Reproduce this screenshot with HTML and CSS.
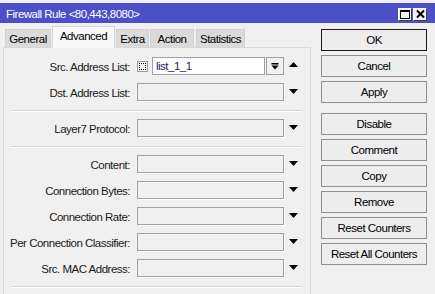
FILE: index.html
```html
<!DOCTYPE html>
<html>
<head>
<meta charset="utf-8">
<link rel="stylesheet" href="styles.css">
</head>
<body>
<div class="window">
  <div class="titlebar">
    <span class="title">Firewall Rule &lt;80,443,8080&gt;</span>
    <div class="wbtns">
      <span class="wbtn"><svg width="10" height="9" viewBox="0 0 10 9"><rect x="0.5" y="0.5" width="9" height="8" fill="none" stroke="#000"/><rect x="0" y="0" width="10" height="2" fill="#000"/></svg></span>
      <span class="wbtn"><svg width="9" height="8" viewBox="0 0 9 8"><path d="M1 0.5 L8 7.5 M8 0.5 L1 7.5" stroke="#000" stroke-width="2"/></svg></span>
    </div>
  </div>
  <div class="main">
    <div class="left">
      <div class="tabs">
        <div class="tab t-general">General</div>
        <div class="tab active t-advanced">Advanced</div>
        <div class="tab t-extra">Extra</div>
        <div class="tab t-action">Action</div>
        <div class="tab t-stats">Statistics</div>
      </div>
      <div class="panel">
        <div class="group first">
          <div class="row">
            <span class="lbl">Src. Address List:</span>
            <div class="ctrl combo">
              <span class="chk"></span>
              <span class="text">list_1_1</span>
              <span class="ddbtn"><svg width="8" height="7" viewBox="0 0 8 7"><rect x="0.5" y="0" width="7" height="1.5" fill="#000"/><polygon points="0.5,2.5 7.5,2.5 4,6.5" fill="#000"/></svg></span>
            </div>
            <svg class="arrow up" width="9" height="5" viewBox="0 0 9 5"><polygon points="0,5 9,5 4.5,0" fill="#000"/></svg>
          </div>
          <div class="row">
            <span class="lbl">Dst. Address List:</span>
            <div class="ctrl field"></div>
            <svg class="arrow" width="9" height="5" viewBox="0 0 9 5"><polygon points="0,0 9,0 4.5,5" fill="#000"/></svg>
          </div>
        </div>
        <div class="sep"></div>
        <div class="group">
          <div class="row">
            <span class="lbl">Layer7 Protocol:</span>
            <div class="ctrl field"></div>
            <svg class="arrow" width="9" height="5" viewBox="0 0 9 5"><polygon points="0,0 9,0 4.5,5" fill="#000"/></svg>
          </div>
        </div>
        <div class="sep"></div>
        <div class="group">
          <div class="row">
            <span class="lbl">Content:</span>
            <div class="ctrl field"></div>
            <svg class="arrow" width="9" height="5" viewBox="0 0 9 5"><polygon points="0,0 9,0 4.5,5" fill="#000"/></svg>
          </div>
          <div class="row">
            <span class="lbl">Connection Bytes:</span>
            <div class="ctrl field"></div>
            <svg class="arrow" width="9" height="5" viewBox="0 0 9 5"><polygon points="0,0 9,0 4.5,5" fill="#000"/></svg>
          </div>
          <div class="row">
            <span class="lbl">Connection Rate:</span>
            <div class="ctrl field"></div>
            <svg class="arrow" width="9" height="5" viewBox="0 0 9 5"><polygon points="0,0 9,0 4.5,5" fill="#000"/></svg>
          </div>
          <div class="row">
            <span class="lbl">Per Connection Classifier:</span>
            <div class="ctrl field"></div>
            <svg class="arrow" width="9" height="5" viewBox="0 0 9 5"><polygon points="0,0 9,0 4.5,5" fill="#000"/></svg>
          </div>
          <div class="row">
            <span class="lbl">Src. MAC Address:</span>
            <div class="ctrl field"></div>
            <svg class="arrow" width="9" height="5" viewBox="0 0 9 5"><polygon points="0,0 9,0 4.5,5" fill="#000"/></svg>
          </div>
        </div>
        <div class="sep"></div>
      </div>
    </div>
    <div class="buttons">
      <div class="btn default">OK</div>
      <div class="btn">Cancel</div>
      <div class="btn">Apply</div>
      <div class="btn spaced">Disable</div>
      <div class="btn">Comment</div>
      <div class="btn">Copy</div>
      <div class="btn">Remove</div>
      <div class="btn">Reset Counters</div>
      <div class="btn">Reset All Counters</div>
    </div>
  </div>
</div>
</body>
</html>
```
FILE: styles.css
```css
* { box-sizing: border-box; }
html, body {
  margin: 0;
  padding: 0;
}
body {
  width: 435px;
  height: 294px;
  overflow: hidden;
  background: #f0f0f0;
  font-family: "Liberation Sans", Arial, sans-serif;
  font-size: 11.5px;
  letter-spacing: -0.5px;
  color: #000;
}
.window {
  width: 435px;
  height: 294px;
}
.titlebar {
  margin-top: 3px;
  height: 20px;
  background: #4b50c8;
  color: #fff;
  display: flex;
  align-items: center;
  justify-content: space-between;
  padding: 0 8px 0 6px;
}
.title {
  line-height: 20px;
  padding-top: 1px;
  font-size: 11.5px;
  letter-spacing: -0.5px;
}
.wbtns {
  display: flex;
  gap: 1px;
  margin-top: 2px;
}
.wbtn {
  width: 14px;
  height: 13px;
  background: #f0f0f0;
  border-top: 1px solid #ffffff;
  border-left: 1px solid #ffffff;
  border-right: 1px solid #404040;
  border-bottom: 1px solid #404040;
  display: flex;
  align-items: center;
  justify-content: center;
}
.main {
  display: flex;
}
.left {
  width: 308px;
  margin-left: 3px;
}
.tabs {
  display: flex;
  align-items: flex-end;
  height: 24px;
  padding-left: 2px;
  position: relative;
  z-index: 1;
}
.tab {
  height: 18px;
  margin-right: 1px;
  background: #dadada;
  border: 1px solid #d2d2d2;
  border-bottom: none;
  text-align: center;
  line-height: 17px;
  padding-top: 1px;
}
.tab.active {
  height: 22px;
  background: #f9f9f9;
  border-color: #d6d6d6;
  line-height: 18px;
  padding-top: 0;
  margin-bottom: -1px;
}
.t-general { width: 46px; }
.t-advanced { width: 63px; }
.t-extra { width: 33px; }
.t-action { width: 44px; margin-right: 2px; }
.t-stats { width: 49px; }
.panel {
  border: 1px solid #d8d8d8;
  border-bottom: none;
  height: 248px;
  background: #f0f0f0;
}
.group {
  display: flex;
  flex-direction: column;
  gap: 8px;
  padding: 8px 0 9px;
}
.group.first {
  padding-top: 9px;
}
.sep {
  height: 1px;
  background: #d8d8d8;
  margin: 0 8px 0 7px;
  box-shadow: 0 1px 0 #ffffff;
}
.row {
  display: flex;
  align-items: center;
  height: 18px;
}
.lbl {
  width: 126px;
  text-align: right;
  white-space: nowrap;
  color: #1a1a1a;
  padding-top: 1px;
}
.ctrl {
  width: 147px;
  height: 18px;
  margin-left: 7px;
}
.field {
  border: 1px solid #a0a0a0;
  background: #f0f0f0;
  box-shadow: 1px 1px 0 #ffffff;
}
.combo {
  display: flex;
  align-items: center;
}
.chk {
  width: 11px;
  height: 11px;
  border: 1px solid #9a9a9a;
  background: #f4f4f4;
  margin-right: 4px;
  position: relative;
}
.chk::after {
  content: "";
  position: absolute;
  left: 1px;
  top: 1px;
  right: 1px;
  bottom: 1px;
  border: 1px dotted #000;
}
.text {
  width: 113px;
  height: 18px;
  border: 1px solid #a0a0a0;
  background: #ffffff;
  color: #1c1c5c;
  padding-left: 3px;
  line-height: 17px;
}
.ddbtn {
  width: 18px;
  height: 18px;
  margin-left: 1px;
  border: 1px solid #a0a0a0;
  background: #f0f0f0;
  display: flex;
  align-items: center;
  justify-content: center;
}
.arrow {
  margin-left: 5px;
  margin-top: -1px;
}
.arrow.up {
  margin-top: -3px;
}
.buttons {
  width: 106px;
  margin-left: 10px;
  margin-top: 6px;
  display: flex;
  flex-direction: column;
  gap: 4px;
}
.btn {
  height: 22px;
  border: 1px solid #8f8f8f;
  background: #ededed;
  text-align: center;
  line-height: 21px;
  color: #000;
}
.btn.default {
  border: 1px solid #1a1a1a;
}
.btn.spaced {
  margin-top: 6px;
}
```
